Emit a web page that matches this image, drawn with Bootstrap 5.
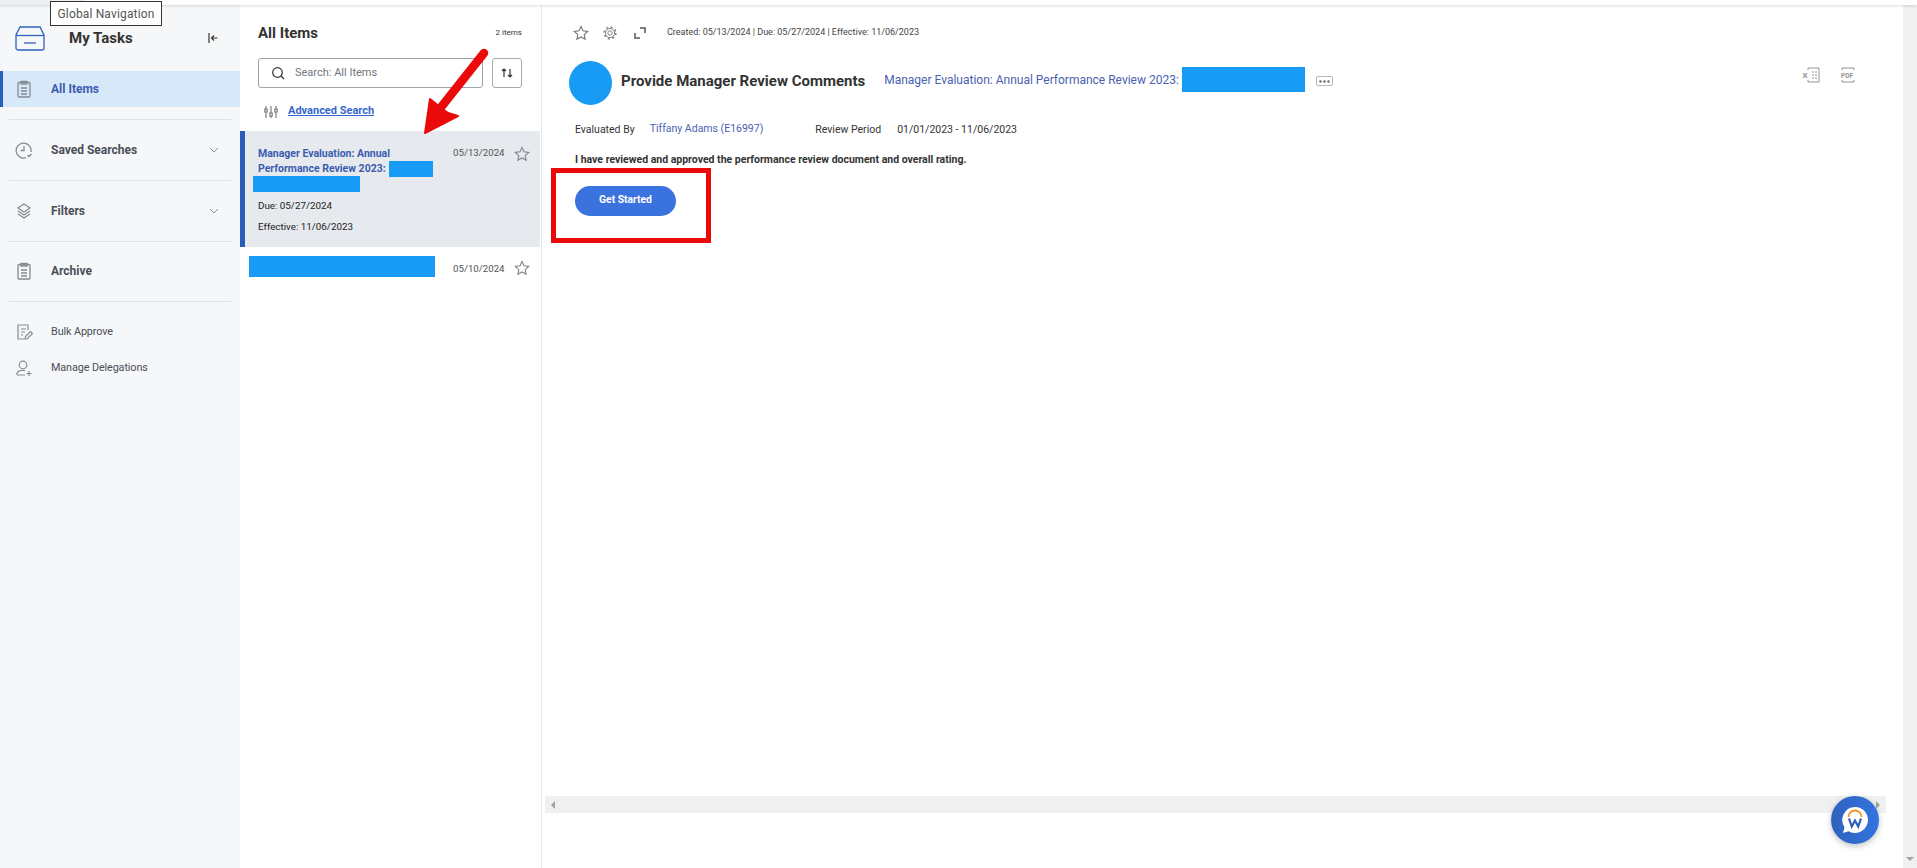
<!DOCTYPE html>
<html lang="en">
<head>
<meta charset="utf-8">
<title>My Tasks</title>
<link rel="stylesheet" href="https://cdn.jsdelivr.net/npm/bootstrap@5.3.0/dist/css/bootstrap.min.css">
<style>
html,body{height:868px;overflow:hidden;background:#fff;font-family:Roboto,"Liberation Sans",sans-serif;color:#333}
.page-frame{position:relative;width:1917px;height:868px;overflow:hidden}
.top-strip{height:5px;background:#fff;box-shadow:0 1px 3px rgba(0,0,0,.14);position:relative;z-index:1}
.top-strip-tab{width:85px;height:5px;background:#eceef0}
.panes{height:863px}
.side-pane{width:240px;background:#f6f7f9}
.side-head{height:66px;padding:0 22px 0 15px}
.side-title{font-size:15px;font-weight:700;color:#333;margin-left:24px}
.side-row{padding-left:15px;padding-right:21px;color:#4a4f57;font-size:12px;font-weight:700}
.side-row svg.lead-icon{width:18px;height:18px;flex:none;margin-right:18px}
.row-active{height:36px;background:#d7e8f9;border-left:3px solid #2a5cb8;padding-left:12px;color:#3a5cb0}
.row-tall{height:60px}
.row-last{height:59px;padding-bottom:2px}
.row-short{height:36px;font-weight:400;font-size:10.8px;letter-spacing:-.1px}
.side-rule{height:1px;margin:0 9px;background:#e0e2e5}
.rule-top{margin-top:12px}
.rule-bottom{margin-bottom:12px}
.list-pane{width:302px;border-right:1px solid #e6e8ea}
.list-title{font-size:15px;font-weight:700;color:#333;margin-top:1px}
.list-head{height:56px;padding:0 19px 0 18px}
.count-note{font-size:8px;color:#333}
.search-row{padding:0 19px 0 18px;gap:9px;margin-top:-3px}
.search-box{width:226px;height:30px;border:1px solid #9ea3aa;border-radius:3px;padding-left:12px;font-size:11px;color:#71767d}
.search-glyph{margin-right:10px}
.sort-btn{width:30px;height:30px;border:1px solid #a6abb2;border-radius:3px;background:#fff;padding:0}
.adv-row{height:43px;padding:4px 0 0 24px;gap:10px}
.adv-link{font-size:11px;font-weight:700;color:#3668d0;text-decoration:underline}
.task-selected{height:116px;width:300px;background:#e6e9ed;border-left:5px solid #2a5cb8;padding-left:13px;padding-top:15px}
.task-name{font-size:10.5px;font-weight:700;color:#3a5cb0;line-height:15px;width:190px}
.mask{background:#189bf4;display:inline-block;flex:none}
.mask-a{width:44px;height:16px;margin:-2px 0 -2px 1px;vertical-align:middle}
.mask-b{width:107px;height:16px;display:block;margin-left:-5px}
.mask-c{width:186px;height:21px}
.mask-d{width:123px;height:25px;margin-left:3px;margin-bottom:8px}
.meta-line{font-size:9.8px;color:#222;line-height:12px}
.meta-due{margin-top:8px}
.meta-eff{margin-top:9px}
.task-date{font-size:9.7px;color:#555;white-space:nowrap}
.date-sel{margin-left:5px;width:51px}
.date-other{margin:6px 0 0 18px;width:51px}
.star-cell{width:16px;height:16px;margin-left:10px;flex:none}
.star-other{margin-top:4px}
.task-other{height:42px;padding:9px 11px 0 9px}
.main-pane{min-width:0}
.tool-row{height:56px;padding-left:31px;gap:14px;font-size:9px;color:#444}
.tool-expand{margin-left:3px}
.tool-text{margin-left:7px}
.title-row{height:44px;padding-left:27px;padding-right:48px}
.avatar-dot{width:43px;height:44px;border-radius:50%;background:#189bf4;flex:none}
.task-heading{font-size:15px;font-weight:700;color:#333;margin:0 0 5px 9px;white-space:nowrap}
.task-link{font-size:12px;color:#4a5fb0;margin:0 0 6px 19px;white-space:nowrap}
.dots-btn{width:17px;height:10px;border:1px solid #b5b9be;border-radius:2px;margin:0 0 4px 11px;background:#fff;padding:0;line-height:0}
.export-icons{gap:21px;margin:-16px 0 0 auto}
.export-icons svg{overflow:visible}
.detail-row{margin:15px 0 0 33px;height:20px;font-size:10.5px;color:#333}
.detail-link{color:#4a5fb0;font-size:10.5px;margin:0 0 2px 15px}
.detail-gap{margin-left:52px}
.detail-val{margin-left:16px}
.note-line{margin:10px 0 0 33px;height:20px;font-size:10.5px;font-weight:700;color:#333}
.go-btn{margin:16px 0 0 33px;width:101px;height:30px;border-radius:15px;background:#3a72de;color:#fff;font-size:10.3px;font-weight:700;border:0;padding:0 0 3px}
.hscroll{height:17px;background:#f0f0f0;margin:auto 17px 55px 3px;padding:0 6px}
.vscroll{width:14px;background:#f0f0f0;padding-bottom:7px}
.tri-l{width:0;height:0;border:4px solid transparent;border-right:4px solid #a3a3a3;border-left:0}
.tri-r{width:0;height:0;border:4px solid transparent;border-left:4px solid #a3a3a3;border-right:0}
.tri-d{width:0;height:0;border:4px solid transparent;border-top:4px solid #a3a3a3;border-bottom:0}
.tip-box{position:absolute;left:50px;top:1px;width:112px;height:25px;background:#fff;border:1px solid #333;font-size:12px;color:#555;z-index:5;letter-spacing:.15px;line-height:24px;text-align:center}
.red-frame{position:absolute;left:551px;top:168px;width:160px;height:75px;border:5px solid #ea0a0a;z-index:4}
.red-arrow{position:absolute;left:415px;top:42px;z-index:4}
.chat-fab{position:absolute;left:1831px;top:796px;width:48px;height:48px;border-radius:50%;background:linear-gradient(90deg,#2f62bd,#3374df);box-shadow:0 2px 6px rgba(0,0,0,.25);z-index:6}
</style>
</head>
<body>
<div class="page-frame">
  <div class="top-strip"><div class="top-strip-tab"></div></div>
  <div class="panes d-flex">
    <aside class="side-pane flex-shrink-0">
      <div class="side-head d-flex align-items-center">
        <svg width="30" height="25" viewBox="0 0 30 25" fill="none" stroke="#2f62bd" stroke-width="1.3"><path d="M5 1h20l4 8v13a2 2 0 0 1-2 2H3a2 2 0 0 1-2-2V9z"/><path d="M1 9.500h28"/><path d="M9 17h12"/></svg>
        <span class="side-title">My Tasks</span>
        <svg class="ms-auto" width="10" height="12" viewBox="0 0 10 12" fill="none" stroke="#333" stroke-width="1.2"><path d="M1 1v10M9.500 6H3.500M6 3.500 3.500 6 6 8.500"/></svg>
      </div>
      <div class="side-row row-active d-flex align-items-center">
        <svg class="lead-icon" viewBox="0 0 18 18" fill="none" stroke="#858b93" stroke-width="1.3"><rect x="3" y="2.500" width="12" height="14.500" rx="1"/><path d="M6 1.500h6v2.500H6zM6 8h6M6 11h6M6 14h6"/></svg>
        All Items
      </div>
      <div class="side-rule rule-top"></div>
      <div class="side-row row-tall d-flex align-items-center">
        <svg class="lead-icon" viewBox="0 0 18 18" fill="none" stroke="#858b93" stroke-width="1.3"><path d="M16 11a7.500 7.500 0 1 0-5 5.700"/><path d="M9 5v4.500H5.500"/><path d="m12.500 14 1.500 1.500 2.500-2.500"/></svg>
        Saved Searches
        <svg class="ms-auto" width="10" height="6" viewBox="0 0 10 6" fill="none" stroke="#8a8f96" stroke-width="1"><path d="m1 1 4 4 4-4"/></svg>
      </div>
      <div class="side-rule"></div>
      <div class="side-row row-tall d-flex align-items-center">
        <svg class="lead-icon" viewBox="0 0 18 18" fill="none" stroke="#858b93" stroke-width="1.3"><path d="m9 2 6 4-6 4-6-4z"/><path d="m3 9 6 4 6-4M3 12l6 4 6-4"/></svg>
        Filters
        <svg class="ms-auto" width="10" height="6" viewBox="0 0 10 6" fill="none" stroke="#8a8f96" stroke-width="1"><path d="m1 1 4 4 4-4"/></svg>
      </div>
      <div class="side-rule"></div>
      <div class="side-row row-last d-flex align-items-center">
        <svg class="lead-icon" viewBox="0 0 18 18" fill="none" stroke="#858b93" stroke-width="1.3"><rect x="3" y="2.500" width="12" height="14.500" rx="1"/><path d="M6 1.500h6v2.500H6zM6 8h6M6 11h6M6 14h6"/></svg>
        Archive
      </div>
      <div class="side-rule rule-bottom"></div>
      <div class="side-row row-short d-flex align-items-center">
        <svg class="lead-icon" viewBox="0 0 18 18" fill="none" stroke="#858b93" stroke-width="1.2"><path d="M13 7V2H3v14h6"/><path d="M6 6h5M6 9h4M6 12h2"/><path d="m10 16 .5-2.500 5-5 2 2-5 5z"/></svg>
        Bulk Approve
      </div>
      <div class="side-row row-short d-flex align-items-center">
        <svg class="lead-icon" viewBox="0 0 18 18" fill="none" stroke="#858b93" stroke-width="1.2"><circle cx="8" cy="6" r="3.800"/><path d="M2 16v-1.500a4 4 0 0 1 4-3h4"/><path d="M2 16h8M14 12v5M11.500 14.500h5"/></svg>
        Manage Delegations
      </div>
    </aside>

    <section class="list-pane flex-shrink-0">
      <div class="list-head d-flex align-items-center justify-content-between">
        <span class="list-title">All Items</span>
        <span class="count-note">2 items</span>
      </div>
      <div class="search-row d-flex">
        <div class="search-box d-flex align-items-center">
          <svg width="14" height="14" viewBox="0 0 14 14" fill="none" stroke="#333" stroke-width="1.2" class="search-glyph"><circle cx="6.500" cy="6.500" r="4.800"/><path d="m10 10 3 3"/></svg>
          Search: All Items
        </div>
        <button class="sort-btn d-flex align-items-center justify-content-center" type="button" aria-label="Sort">
          <svg width="12" height="12" viewBox="0 0 12 12" fill="none" stroke="#333" stroke-width="1.2"><path d="M3 10V2M1 4l2-2 2 2M9 2v8M7 8l2 2 2-2"/></svg>
        </button>
      </div>
      <div class="adv-row d-flex align-items-center">
        <svg width="14" height="14" viewBox="0 0 14 14" fill="none" stroke="#7a8088" stroke-width="1.2"><path d="M2 1v12M7 1v12M12 1v12"/><rect x=".8" y="4" width="2.400" height="3" fill="#fff"/><rect x="5.800" y="8" width="2.400" height="3" fill="#fff"/><rect x="10.800" y="4" width="2.400" height="3" fill="#fff"/></svg>
        <a class="adv-link" href="#">Advanced Search</a>
      </div>
      <div class="task-selected d-flex">
        <div>
          <div class="task-name">Manager Evaluation: Annual Performance Review 2023: <span class="mask mask-a"></span></div>
          <span class="mask mask-b"></span>
          <div class="meta-line meta-due">Due: 05/27/2024</div>
          <div class="meta-line meta-eff">Effective: 11/06/2023</div>
        </div>
        <span class="task-date date-sel">05/13/2024</span>
        <svg class="star-cell" viewBox="0 0 16 16" fill="none" stroke="#7f848b" stroke-width="1.100"><path d="m8 1.500 2 4.300 4.700.6-3.500 3.200.9 4.700L8 12l-4.100 2.300.9-4.700L1.300 6.400 6 5.800z"/></svg>
      </div>
      <div class="task-other d-flex align-items-start">
        <span class="mask mask-c"></span>
        <span class="task-date date-other">05/10/2024</span>
        <svg class="star-cell star-other" viewBox="0 0 16 16" fill="none" stroke="#7f848b" stroke-width="1.100"><path d="m8 1.500 2 4.300 4.700.6-3.500 3.200.9 4.700L8 12l-4.100 2.300.9-4.700L1.300 6.400 6 5.800z"/></svg>
      </div>
    </section>

    <main class="main-pane flex-grow-1 d-flex flex-column">
      <div class="tool-row d-flex align-items-center">
        <svg width="16" height="16" viewBox="0 0 16 16" fill="none" stroke="#6f747b" stroke-width="1.100"><path d="m8 1.500 2 4.300 4.700.6-3.500 3.200.9 4.700L8 12l-4.100 2.300.9-4.700L1.300 6.400 6 5.800z"/></svg>
        <svg width="14" height="14" viewBox="0 0 14 14" fill="none" stroke="#7f848b"><circle cx="7" cy="7" r="2.200"/><circle cx="7" cy="7" r="4.600"/><circle cx="7" cy="7" r="5.800" stroke-width="1.600" stroke-dasharray="2 2.560"/></svg>
        <svg class="tool-expand" width="12" height="12" viewBox="0 0 12 12" fill="none" stroke="#7a7f86" stroke-width="2"><path d="M1 6v5h5M6 1h5v5"/></svg>
        <span class="tool-text">Created: 05/13/2024 | Due: 05/27/2024 | Effective: 11/06/2023</span>
      </div>
      <div class="title-row d-flex align-items-center">
        <div class="avatar-dot"></div>
        <h1 class="task-heading">Provide Manager Review Comments</h1>
        <a class="task-link text-decoration-none" href="#">Manager Evaluation: Annual Performance Review 2023:</a>
        <span class="mask mask-d"></span>
        <button class="dots-btn d-flex align-items-center justify-content-center" type="button" aria-label="More">
          <svg width="11" height="3" viewBox="0 0 11 3" fill="#666"><circle cx="1.500" cy="1.500" r="1.200"/><circle cx="5.500" cy="1.500" r="1.200"/><circle cx="9.500" cy="1.500" r="1.200"/></svg>
        </button>
        <div class="export-icons d-flex align-items-center">
          <svg width="16" height="16" viewBox="0 0 16 16" fill="none" stroke="#8f949c"><path d="M4 3V1h11v14H4v-2"/><path d="M8 5h5M8 8h5M8 11h5" stroke-dasharray="2 1"/><text x="-1.500" y="11" font-size="8" font-weight="700" fill="#8f949c" stroke="none" font-family="Roboto">X</text></svg>
          <svg width="14" height="16" viewBox="0 0 14 16" fill="none" stroke="#8f949c"><path d="M1 3V1h12v2M1 13v2h12v-2"/><text x="0" y="10.500" font-size="6.500" font-weight="700" fill="#8f949c" stroke="none" font-family="Roboto">PDF</text></svg>
        </div>
      </div>
      <div class="detail-row d-flex align-items-center">
        <span>Evaluated By</span>
        <a class="detail-link text-decoration-none" href="#">Tiffany Adams (E16997)</a>
        <span class="detail-gap">Review Period</span>
        <span class="detail-val">01/01/2023 - 11/06/2023</span>
      </div>
      <div class="note-line d-flex align-items-center">I have reviewed and approved the performance review document and overall rating.</div>
      <div><button class="go-btn" type="button">Get Started</button></div>
      <div class="hscroll d-flex align-items-center justify-content-between">
        <span class="tri-l"></span><span class="tri-r"></span>
      </div>
    </main>

    <div class="vscroll flex-shrink-0 d-flex flex-column justify-content-end align-items-center"><span class="tri-d"></span></div>
  </div>

  <div class="tip-box">Global Navigation</div>
  <div class="red-frame"></div>
  <svg class="red-arrow" width="80" height="100" viewBox="0 0 80 100"><path d="M69 11 27 64" stroke="#ea0a0a" stroke-width="8.500" stroke-linecap="round" fill="none"/><path d="M10 91 15 57 25 65 33 71 43 74z" fill="#ea0a0a" stroke="#ea0a0a" stroke-width="2" stroke-linejoin="round"/></svg>
  <div class="chat-fab d-flex align-items-center justify-content-center">
    <svg width="28" height="28" viewBox="0 0 28 28"><path d="M14 1a13 13 0 1 1-6.500 24.300L2 27l1.500-5.800A13 13 0 0 1 14 1z" fill="#fff"/><path d="M7.500 11a6.500 6.500 0 0 1 13 0" fill="none" stroke="#f0942a" stroke-width="1.800"/><path d="m8 12.500 2.800 8 3.200-6 3.200 6 2.800-8" fill="none" stroke="#2f5fb5" stroke-width="2.200"/></svg>
  </div>
</div>
<script src="https://cdn.jsdelivr.net/npm/bootstrap@5.3.0/dist/js/bootstrap.bundle.min.js"></script>
</body>
</html>
